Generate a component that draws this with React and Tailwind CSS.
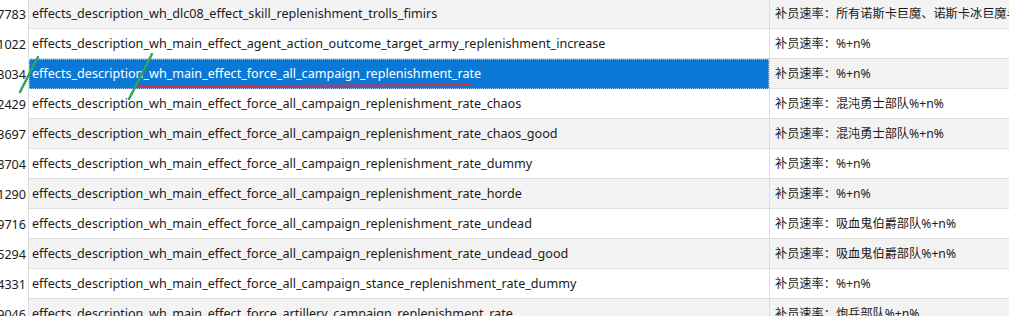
import React from 'react';

const P = 'effects_description_wh_main_effect_force_all_campaign_';

const ROWS = [
  { id: '7783', key: 'effects_description_wh_dlc08_effect_skill_replenishment_trolls_fimirs', text: '补员速率：所有诺斯卡巨魔、诺斯卡冰巨魔与巨魔%+n%' },
  { id: '1022', key: 'effects_description_wh_main_effect_agent_action_outcome_target_army_replenishment_increase', text: '补员速率：%+n%' },
  { id: '3034', key: P + 'replenishment_rate', text: '补员速率：%+n%', selected: true },
  { id: '2429', key: P + 'replenishment_rate_chaos', text: '补员速率：混沌勇士部队%+n%' },
  { id: '3697', key: P + 'replenishment_rate_chaos_good', text: '补员速率：混沌勇士部队%+n%' },
  { id: '8704', key: P + 'replenishment_rate_dummy', text: '补员速率：%+n%' },
  { id: '1290', key: P + 'replenishment_rate_horde', text: '补员速率：%+n%' },
  { id: '9716', key: P + 'replenishment_rate_undead', text: '补员速率：吸血鬼伯爵部队%+n%' },
  { id: '5294', key: P + 'replenishment_rate_undead_good', text: '补员速率：吸血鬼伯爵部队%+n%' },
  { id: '4331', key: P + 'stance_replenishment_rate_dummy', text: '补员速率：%+n%' },
  { id: '9046', key: 'effects_description_wh_main_effect_force_artillery_campaign_replenishment_rate', text: '补员速率：炮兵部队%+n%' },
];

export default function App() {
  return (
    <div
      className="relative w-[1009px] h-[316px] overflow-hidden bg-white text-[12.6px] text-[#1b1b1b]"
      style={{ fontFamily: '"Noto Sans", "Noto Sans CJK SC", sans-serif' }}
    >
      <div className="-mt-px flex flex-col">
        {ROWS.map((row, i) => {
          const shade = i % 2 === 0 ? 'bg-[#f3f3f3]' : 'bg-white';
          return (
            <div key={row.id} className="flex h-[30px] shrink-0">
              <div className="w-[28px] shrink-0 overflow-hidden flex items-center justify-end pr-[2px] pt-[2px] bg-white whitespace-nowrap">
                {row.id}
              </div>
              <div className="w-px shrink-0 bg-[#dcdcdc]" />
              <div
                className={
                  row.selected
                    ? 'w-[740px] shrink-0 flex items-center pl-[2px] pt-[1px] whitespace-nowrap overflow-hidden bg-[#0b78d5] text-white border border-dotted border-[#9cc6ee]'
                    : `w-[740px] shrink-0 flex items-center pl-[3px] pt-[2px] whitespace-nowrap overflow-hidden border-b border-[#dedede] ${shade}`
                }
              >
                {row.key}
              </div>
              <div className="w-px shrink-0 bg-[#dcdcdc]" />
              <div className={`flex-1 flex items-center pl-[5px] pt-[2px] whitespace-nowrap overflow-hidden border-b border-[#dedede] text-[12.2px] ${shade}`}>
                {row.text}
              </div>
            </div>
          );
        })}
      </div>
      <svg className="absolute inset-0 pointer-events-none" width="1009" height="316">
        <path d="M138 86.5 L470 85" stroke="#d4304a" strokeWidth="2.2" strokeLinecap="round" fill="none" />
        <path d="M20 92 L38 57" stroke="#2ea55a" strokeWidth="2.5" strokeLinecap="round" />
        <path d="M129 99 L152 54" stroke="#2ea55a" strokeWidth="2.5" strokeLinecap="round" />
      </svg>
    </div>
  );
}
